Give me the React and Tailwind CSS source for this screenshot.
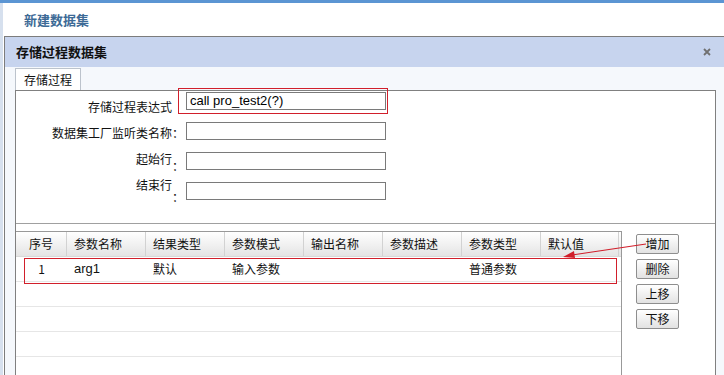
import React from "react";

const cols = [
    { key: "idx", title: "序号", w: "w-[51px]", center: true },
    { key: "name", title: "参数名称", w: "w-[79px]" },
    { key: "result", title: "结果类型", w: "w-[79px]" },
    { key: "mode", title: "参数模式", w: "w-[79px]" },
    { key: "out", title: "输出名称", w: "w-[79px]" },
    { key: "desc", title: "参数描述", w: "w-[79px]" },
    { key: "type", title: "参数类型", w: "w-[79px]" },
    { key: "def", title: "默认值", w: "w-[78px]" },
];

const rows = [
    { idx: "1", name: "arg1", result: "默认", mode: "输入参数", out: "", desc: "", type: "普通参数", def: "" },
    {}, {}, {}, {},
];

function Field({ label, colon = true, labelClass, colonClass, value }) {
    return (
        <div className="flex items-start h-[30px]">
            <div className="w-[168px] flex justify-end">
                <span className={`text-[12px] leading-[14px] ${labelClass}`}>{label}</span>
                <span className={`w-[12px] text-[12px] leading-[14px] ${colonClass}`}>{colon ? "：" : ""}</span>
            </div>
            <div className="ml-[2px] w-[200px] h-[18px] border border-[#7a7a7a] bg-white px-[3px] flex items-center overflow-hidden">
                <span className="font-['Liberation_Sans',sans-serif] text-[13px] leading-[14px] text-black">{value}</span>
            </div>
        </div>
    );
}

function Btn({ children }) {
    return (
        <button className="w-[43px] h-[20px] border border-[#8e8e8e] rounded-[2px] bg-gradient-to-b from-white to-[#e2e2e2] text-[12px] leading-[14px] text-[#111] flex items-center justify-center">
            {children}
        </button>
    );
}

export default function App() {
    return (
        <div className="relative w-[724px] h-[375px] overflow-hidden bg-white flex flex-col font-['Noto_Sans_CJK_SC',sans-serif] text-[#111]">
            <div className="h-[3px] bg-[#5b95d3]" />
            <div className="flex flex-1 min-h-0">
                <div className="w-[3px] bg-[#d6e0ee]" />
                <div className="flex-1 flex flex-col min-w-0">
                    {/* page title */}
                    <div className="h-[33px] flex items-center pl-[21px]">
                        <span className="text-[13px] font-bold text-[#3d6a96]">新建数据集</span>
                    </div>

                    {/* dialog */}
                    <div className="ml-[1px] flex-1 flex flex-col border-t border-l border-[#7c7c7c] min-h-0">
                        <div className="h-[30px] bg-[#c7d4ee] flex items-center justify-between pl-[11px] pr-[13px] shrink-0">
                            <span className="text-[13px] font-bold">存储过程数据集</span>
                            <svg width="8" height="8" viewBox="0 0 8 8">
                                <path d="M1 1L7 7M7 1L1 7" stroke="#707070" strokeWidth="1.8" />
                            </svg>
                        </div>

                        <div className="flex-1 bg-[#f5f8fc] pl-[10px] flex flex-col min-h-0">
                            {/* tabs */}
                            <div className="h-[23px] flex items-end shrink-0">
                                <div className="w-[66px] h-[22px] bg-white border-t border-l border-r border-[#bcc3cc] flex items-center pl-[8px]">
                                    <span className="text-[12px] leading-[14px]">存储过程</span>
                                </div>
                            </div>

                            {/* panel */}
                            <div className="w-[701px] flex-1 bg-white border-t border-l border-r border-[#808080] flex flex-col min-h-0">
                                <div className="h-[133px] border-b border-[#a0a0a0] pt-[1px] shrink-0">
                                    <Field label="存储过程表达式" colon={false} labelClass="mt-[8px]" value="call pro_test2(?)" />
                                    <Field label="数据集工厂监听类名称" labelClass="mt-[4px]" colonClass="mt-[4px]" value="" />
                                    <Field label="起始行" labelClass="mt-[0px]" colonClass="mt-[7px]" value="" />
                                    <Field label="结束行" labelClass="-mt-[4px]" colonClass="mt-[8px]" value="" />
                                </div>

                                <div className="flex mt-[7px]">
                                    {/* grid */}
                                    <div className="w-[606px] border-t border-r border-[#999]">
                                        <div className="flex h-[25px] bg-gradient-to-b from-white to-[#e4e4e4] border-b border-[#d8d8d8]">
                                            {cols.map(c => (
                                                <div
                                                    key={c.key}
                                                    className={`${c.w} h-full border-r border-[#d2d2d2] flex items-center text-[12px] ${c.center ? "justify-center" : "pl-[7px]"}`}
                                                >
                                                    {c.title}
                                                </div>
                                            ))}
                                        </div>
                                        {rows.map((r, i) => (
                                            <div key={i} className="flex h-[25px] border-b border-[#e6e6e6]">
                                                {cols.map(c => (
                                                    <div
                                                        key={c.key}
                                                        className={`${c.w} h-full flex items-center text-[12px] ${c.center ? "justify-center" : "pl-[7px]"} ${c.key === "name" ? "font-['Liberation_Sans',sans-serif] text-[13px]" : ""}`}
                                                    >
                                                        {r[c.key] || ""}
                                                    </div>
                                                ))}
                                            </div>
                                        ))}
                                    </div>

                                    {/* side buttons */}
                                    <div className="ml-[14px] mt-[3px] flex flex-col gap-[5px]">
                                        <Btn>增加</Btn>
                                        <Btn>删除</Btn>
                                        <Btn>上移</Btn>
                                        <Btn>下移</Btn>
                                    </div>
                                </div>
                            </div>
                        </div>
                    </div>
                </div>
            </div>

            {/* red annotations */}
            <div className="absolute left-[178px] top-[88px] w-[210px] h-[26px] border-[1.5px] border-[#d11f2b]" />
            <div className="absolute left-[24px] top-[258px] w-[593px] h-[26px] border-[1.5px] border-[#d11f2b]" />
            <svg className="absolute left-0 top-0" width="724" height="375">
                <line x1="646" y1="244" x2="572" y2="255" stroke="#d11f2b" strokeWidth="1.2" />
                <polygon points="563,257 574,251 575,258" fill="#d11f2b" />
            </svg>
        </div>
    );
}
